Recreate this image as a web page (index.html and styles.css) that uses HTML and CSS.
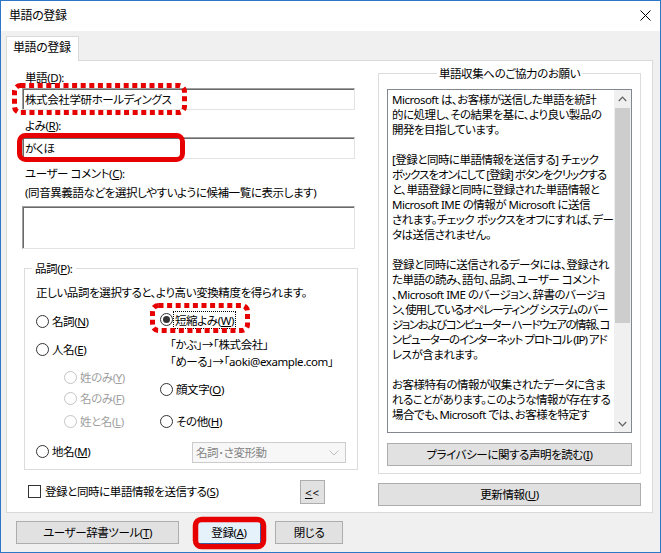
FILE: index.html
```html
<!DOCTYPE html>
<html lang="ja">
<head>
<meta charset="utf-8">
<title>単語の登録</title>
<link rel="stylesheet" href="styles.css">
</head>
<body>
<div class="window">
  <div class="titlebar">
    <span class="title">単語の登録</span>
    <svg class="close" width="11" height="11" viewBox="0 0 11 11"><path d="M0.5 0.5 L10.5 10.5 M10.5 0.5 L0.5 10.5" stroke="#000" stroke-width="1" fill="none"/></svg>
  </div>
  <div class="main">
    <div class="tab">単語の登録</div>
    <div class="panel">
      <div class="leftcol">
        <div class="label l-word">単語(<u>D</u>):</div>
        <div class="textbox">株式会社学研ホールディングス</div>
        <div class="label l-yomi">よみ(<u>R</u>):</div>
        <div class="textbox tb-yomi">がくほ</div>
        <div class="label l-comment">ユーザー コメント(<u>C</u>):</div>
        <div class="label l-note">(同音異義語などを選択しやすいように候補一覧に表示します)</div>
        <div class="textbox memo"></div>
        <div class="group hinshi">
          <div class="group-title">品詞(<u>P</u>):</div>
          <div class="desc">正しい品詞を選択すると、より高い変換精度を得られます。</div>
          <div class="pos-cols">
            <div class="pos-left">
              <div class="opt o-meishi"><span class="radio"></span>名詞(<u>N</u>)</div>
              <div class="opt o-jinmei"><span class="radio"></span>人名(<u>E</u>)</div>
              <div class="opt sub dis o-sei"><span class="radio"></span>姓のみ(<u>Y</u>)</div>
              <div class="opt sub dis o-mei"><span class="radio"></span>名のみ(<u>F</u>)</div>
              <div class="opt sub dis o-seimei"><span class="radio"></span>姓と名(<u>L</u>)</div>
              <div class="opt o-chimei"><span class="radio"></span>地名(<u>M</u>)</div>
            </div>
            <div class="pos-right">
              <div class="opt o-tanshuku"><span class="radio checked"></span><span class="focus">短縮よみ(<u>W</u>)</span></div>
              <div class="examples">
                <div>「かぶ」→「株式会社」</div>
                <div>「めーる」→「aoki@example.com」</div>
              </div>
              <div class="opt o-kao"><span class="radio"></span>顔文字(<u>O</u>)</div>
              <div class="opt o-other"><span class="radio"></span>その他(<u>H</u>)</div>
              <div class="combo">
                <span>名詞･さ変形動</span>
                <svg width="10" height="6" viewBox="0 0 10 6"><path d="M0.5 0.5 L5 5 L9.5 0.5" stroke="#bdbdbd" stroke-width="1" fill="none"/></svg>
              </div>
            </div>
          </div>
        </div>
        <div class="send-row">
          <span class="checkbox"></span>
          <span class="check-label">登録と同時に単語情報を送信する(<u>S</u>)</span>
          <div class="btn btn-collapse"><u>&lt;</u>&lt;</div>
        </div>
      </div>
      <div class="rightcol">
        <div class="group info">
          <div class="group-title center">単語収集へのご協力のお願い</div>
          <div class="infobox">
            <div class="infotext">Microsoft は、お客様が送信した単語を統計
的に処理し、その結果を基に、より良い製品の
開発を目指しています。

[登録と同時に単語情報を送信する] チェック
<span class="tight">ボックスをオンにして [登録] ボタンをクリックする</span>
と、単語登録と同時に登録された単語情報と
Microsoft IME の情報が Microsoft に送信
されます。チェック ボックスをオフにすれば、デー
タは送信されません。

登録と同時に送信されるデータには、登録され
た単語の読み、語句、品詞、ユーザー コメント
、Microsoft IME のバージョン、辞書のバージョ
<span class="tight">ン、使用しているオペレーティング システムのバー</span>
<span class="tighter">ジョンおよびコンピューター ハードウェアの情報、コ</span>
<span class="tight">ンピューターのインターネット プロトコル (IP) アド</span>
レスが含まれます。

お客様特有の情報が収集されたデータに含ま
れることがあります。このような情報が存在する
場合でも、Microsoft では、お客様を特定す</div>
            <div class="scrollbar">
              <div class="sb-btn"><svg width="9" height="6" viewBox="0 0 9 6"><path d="M0.8 5 L4.5 1.2 L8.2 5" stroke="#606060" stroke-width="1.2" fill="none"/></svg></div>
              <div class="sb-thumb"></div>
              <div class="sb-track"></div>
              <div class="sb-btn"><svg width="9" height="6" viewBox="0 0 9 6"><path d="M0.8 1 L4.5 4.8 L8.2 1" stroke="#606060" stroke-width="1.2" fill="none"/></svg></div>
            </div>
          </div>
          <div class="btn btn-privacy">プライバシーに関する声明を読む(<u>I</u>)</div>
        </div>
        <div class="btn btn-update">更新情報(<u>U</u>)</div>
      </div>
    </div>
    <div class="buttons">
      <div class="btn b-tool">ユーザー辞書ツール(<u>T</u>)</div>
      <div class="btn default b-reg">登録(<u>A</u>)</div>
      <div class="btn b-close">閉じる</div>
    </div>
  </div>
</div>
<svg class="annot" width="661" height="553" viewBox="0 0 661 553">
  <rect x="14.5" y="85.5" width="170" height="27" rx="6" fill="none" stroke="#e60000" stroke-width="5" stroke-dasharray="5 3.6"/>
  <rect x="19.5" y="135.5" width="163" height="24" rx="6" fill="none" stroke="#e60000" stroke-width="5"/>
  <rect x="152.5" y="305.5" width="95" height="25" rx="6" fill="none" stroke="#e60000" stroke-width="5" stroke-dasharray="5 3.6"/>
  <rect x="195.5" y="519.5" width="68" height="27" rx="6" fill="none" stroke="#e60000" stroke-width="5.5"/>
</svg>
</body>
</html>
```
FILE: styles.css
```css
* { box-sizing: border-box; }
html, body { margin: 0; padding: 0; }
body {
  width: 661px;
  height: 553px;
  position: relative;
  overflow: hidden;
  background: #fff;
  font-family: "Noto Sans", "Noto Sans CJK JP", sans-serif;
  font-size: 11.5px;
  letter-spacing: -0.4px;
  line-height: 15px;
  color: #000;
  font-feature-settings: "palt";
}
u { text-decoration: underline; text-underline-offset: 1px; }

.window {
  width: 661px;
  height: 553px;
  border: 1px solid #2a78c6;
  background: #f0f0f0;
  display: flex;
  flex-direction: column;
}
.titlebar {
  flex: none;
  height: 30px;
  background: #fff;
  display: flex;
  align-items: center;
  justify-content: space-between;
  padding: 0 9px 2px 8px;
}
.title { font-size: 12px; }
.main {
  flex: 1;
  display: flex;
  flex-direction: column;
  padding: 5px 7px 0 5px;
}
.tab {
  position: relative;
  z-index: 1;
  width: 73px;
  height: 25px;
  margin-bottom: -1px;
  border: 1px solid #d9d9d9;
  border-bottom: none;
  background: #fff;
  padding: 3px 0 0 6px;
  font-size: 12px;
}
.panel {
  height: 453px;
  border: 1px solid #d9d9d9;
  background: #fff;
  display: flex;
  padding-left: 15px;
}

/* left column */
.leftcol {
  width: 336px;
  display: flex;
  flex-direction: column;
  padding-top: 9px;
}
.label { padding-left: 3px; }
.l-yomi { margin-top: 8px; }
.l-comment { margin-top: 7px; }
.l-note { margin-top: 4px; padding-left: 3px; }
.textbox {
  width: 333px;
  height: 22px;
  margin-top: 3px;
  border: 1px solid;
  border-color: #a0a0a0 #e3e3e3 #e3e3e3 #a0a0a0;
  box-shadow: inset 1px 1px 0 #696969;
  padding: 2px 0 0 2px;
  line-height: 17px;
  background: #fff;
}
.tb-yomi { margin-top: 4px; }
.memo { height: 43px; margin-top: 6px; }

.group {
  border: 1px solid #dcdcdc;
  background: #fff;
}
.group-title {
  margin-top: -8px;
  width: fit-content;
  background: #fff;
  padding: 0 3px;
}
.group-title.center { margin-left: auto; margin-right: auto; padding: 0 2px; }
.hinshi {
  width: 334px;
  margin: 19px 0 0 2px;
  padding: 0 0 6px 11px;
}
.hinshi .group-title { margin-left: -4px; }
.desc { margin-top: 9px; }
.pos-cols { display: flex; }
.pos-left { width: 124px; display: flex; flex-direction: column; }
.pos-right { display: flex; flex-direction: column; }
.opt { display: flex; align-items: center; height: 15px; white-space: nowrap; }
.radio {
  flex: none;
  width: 13px;
  height: 13px;
  margin-right: 3px;
  border: 1px solid #333;
  border-radius: 50%;
  background: #fff;
  display: flex;
  align-items: center;
  justify-content: center;
}
.radio.checked::after {
  content: "";
  width: 7px;
  height: 7px;
  border-radius: 50%;
  background: #333;
}
.dis { color: #a0a0a0; }
.dis .radio { border-color: #c4c4c4; }
.sub { margin-left: 28px; }
.o-meishi { margin-top: 14px; }
.o-jinmei { margin-top: 13px; }
.o-sei { margin-top: 13px; }
.o-mei { margin-top: 6px; }
.o-seimei { margin-top: 8px; }
.o-chimei { margin-top: 15px; }

.o-tanshuku { margin-top: 11px; height: 17px; }
.o-tanshuku .radio { margin-right: 1px; }
.focus { outline: 1px dotted #000; outline-offset: 0; padding: 1px 1px 0; line-height: 15px; }
.examples { margin: 8px 0 0 10px; line-height: 17px; white-space: nowrap; }
.o-kao { margin-top: 12px; }
.o-other { margin-top: 17px; }
.combo {
  margin: 13px 0 0 32px;
  width: 154px;
  height: 21px;
  border: 1px solid #cccccc;
  background: #f7f7f7;
  color: #838383;
  display: flex;
  align-items: center;
  justify-content: space-between;
  padding: 0 6px 0 3px;
}

.send-row {
  margin-top: 10px;
  height: 24px;
  display: flex;
  align-items: center;
  padding-left: 6px;
}
.checkbox {
  width: 13px;
  height: 13px;
  border: 1px solid #333;
  background: #fff;
  margin-right: 4px;
  margin-top: -2px;
}
.check-label { margin-top: -2px; }
.btn {
  border: 1px solid #adadad;
  background: #e1e1e1;
  display: flex;
  align-items: center;
  justify-content: center;
  white-space: nowrap;
}
.btn-collapse {
  margin-left: auto;
  margin-right: 33px;
  width: 25px;
  height: 24px;
  letter-spacing: 1px;
}

/* right column */
.rightcol {
  width: 263px;
  margin-left: 20px;
  padding-top: 12px;
  display: flex;
  flex-direction: column;
}
.info { padding: 0 8px 7px 8px; }
.infobox {
  margin-top: 8px;
  height: 344px;
  border: 1px solid #828790;
  background: #fff;
  display: flex;
}
.infotext {
  flex: 1;
  overflow: hidden;
  white-space: pre;
  padding: 2px 0 0 4px;
  line-height: 15px;
  letter-spacing: -0.5px;
}
.tight { letter-spacing: -1.05px; }
.tighter { letter-spacing: -1.4px; }
.scrollbar {
  width: 17px;
  flex: none;
  background: #f0f0f0;
  display: flex;
  flex-direction: column;
}
.sb-btn {
  height: 17px;
  display: flex;
  align-items: center;
  justify-content: center;
}
.sb-thumb {
  height: 215px;
  margin: 1px 1px 0;
  background: #cdcdcd;
}
.sb-track { flex: 1; }
.btn-privacy { margin-top: 10px; height: 23px; }
.btn-update { margin-top: 9px; height: 23px; }

/* bottom buttons */
.buttons {
  display: flex;
  margin-top: 8px;
  padding-left: 10px;
}
.buttons .btn { height: 23px; }
.b-tool { width: 163px; }
.b-reg { width: 64px; margin-left: 18px; }
.b-close { width: 68px; margin-left: 14px; }
.btn.default { background: #e5f1fb; border-color: #0078d7; }

.annot {
  position: absolute;
  left: 0;
  top: 0;
  pointer-events: none;
}
```
